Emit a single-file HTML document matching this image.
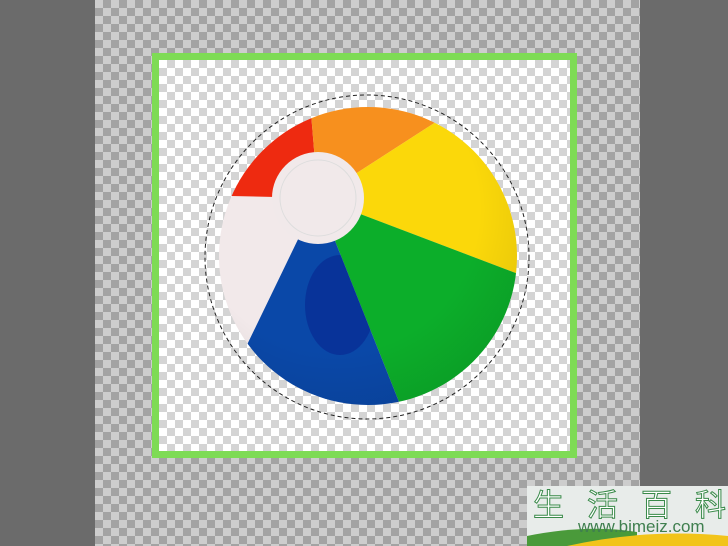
<!DOCTYPE html>
<html><head><style>
html,body{margin:0;padding:0;width:728px;height:546px;overflow:hidden;background:#6b6b6b;}
.out{position:absolute;left:95px;top:0;width:545px;height:546px;
background-color:#cdcdcd;background-image:linear-gradient(45deg,#a3a3a3 25%,transparent 25%,transparent 75%,#a3a3a3 75%),linear-gradient(45deg,#a3a3a3 25%,transparent 25%,transparent 75%,#a3a3a3 75%);background-size:16px 16px;background-position:0 0,8px 8px;}
.in{position:absolute;left:159px;top:60px;width:411px;height:391px;
background-color:#fff;background-image:linear-gradient(45deg,#d4d4d4 25%,transparent 25%,transparent 75%,#d4d4d4 75%),linear-gradient(45deg,#d4d4d4 25%,transparent 25%,transparent 75%,#d4d4d4 75%);background-size:16px 16px;background-position:0 0,8px 8px;}
.frame{position:absolute;left:152px;top:53px;width:411px;height:391px;border:7px solid #7edb55;}
.wm{position:absolute;left:527px;top:486px;width:201px;height:60px;background:#e8ecea;overflow:hidden;}
.wm .cn{position:absolute;left:6px;top:-3px;font:31px/40px "Noto Sans CJK SC",sans-serif;color:#fff;-webkit-text-stroke:1px #3a8a4a;letter-spacing:23px;white-space:nowrap;}
.wm .url{position:absolute;left:51px;top:31px;font:17px "Liberation Sans",sans-serif;color:#3f7f4f;}
</style></head><body>
<div class="out"></div>
<div class="in"></div>
<div class="frame"></div>
<svg width="728" height="546" style="position:absolute;left:0;top:0">
<defs><clipPath id="c"><circle cx="368" cy="256" r="149"/></clipPath>
<clipPath id="b"><polygon points="318,198 430,480 200,480 230,380"/></clipPath>
<radialGradient id="sh" cx="0.4" cy="0.35" r="0.7"><stop offset="0.6" stop-color="#000" stop-opacity="0"/><stop offset="1" stop-color="#000" stop-opacity="0.12"/></radialGradient></defs>
<circle cx="367" cy="257" r="162" fill="none" stroke="#222" stroke-width="1" stroke-dasharray="4 3"/>
<g clip-path="url(#c)">
<rect x="200" y="90" width="340" height="340" fill="#f2e9ea"/>
<polygon points="318,198 305,40 100,40 100,193" fill="#ee2a10"/>
<polygon points="318,198 305,40 480,40 470,100" fill="#f7901e"/>
<polygon points="318,198 470,100 600,40 600,305" fill="#fbd80a"/>
<polygon points="318,198 600,305 600,500 430,480" fill="#0cae2a"/>
<polygon points="318,198 430,480 200,480 230,380" fill="#0a48a8"/>
<ellipse cx="340" cy="305" rx="35" ry="50" fill="#061e8a" opacity="0.5" clip-path="url(#b)"/>
<rect x="200" y="90" width="340" height="340" fill="url(#sh)"/>
</g>
<circle cx="318" cy="198" r="46" fill="#f1e9ea"/>
<circle cx="318" cy="198" r="38" fill="none" stroke="#ddd" stroke-width="1"/>
</svg>
<div class="wm"><svg width="201" height="60" style="position:absolute;left:0;top:0"><path d="M0 50 Q60 38 110 46 L110 60 L0 60Z" fill="#4a9a3a"/><path d="M40 60 Q120 42 201 50 L201 60Z" fill="#f2c41a"/></svg>
<div class="cn">生活百科</div><div class="url">www.bimeiz.com</div></div>
</body></html>
